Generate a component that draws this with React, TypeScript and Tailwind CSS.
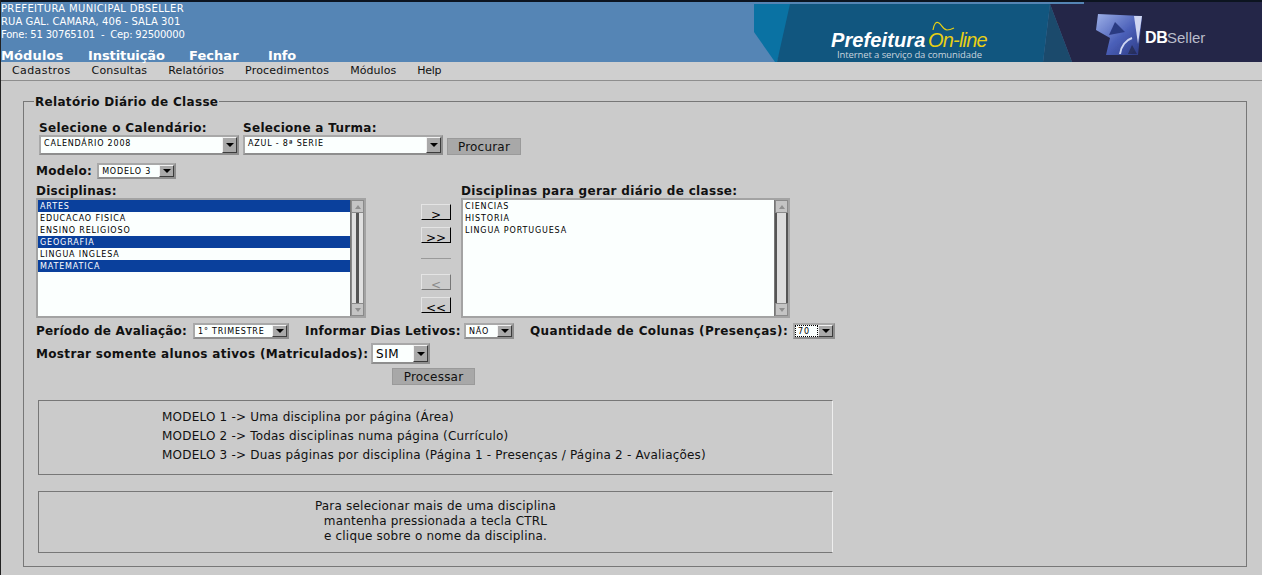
import React from "react";

const FONT = "[font-family:'DejaVu_Sans','Liberation_Sans',sans-serif]";

function Select({ label, w, h, big, dotted }: { label: string; w: string; h: string; big?: boolean; dotted?: boolean }) {
  return (
    <div className={`${w} ${h} flex shrink-0 border-2 border-solid border-t-[#a8a8a8] border-l-[#a8a8a8] border-r-[#8e8e8e] border-b-[#8e8e8e] bg-[#fbfffe]`}>
      <div className={`flex-1 min-w-0 overflow-hidden whitespace-nowrap text-black pl-[3px] ${big ? "text-[12px] leading-[19px] tracking-[0.6px]" : "text-[8px] leading-[13px] tracking-[0.8px]"} ${dotted ? "outline-dotted outline-1 -outline-offset-1 outline-black" : ""}`}>
        {label}
      </div>
      <div className="w-[15px] shrink-0 flex items-center justify-center border border-solid border-t-[#f2f2f2] border-l-[#f2f2f2] border-r-[#3c3c3c] border-b-[#3c3c3c] bg-[#a9a9a9]">
        <div className="w-0 h-0 border-x-[4px] border-x-transparent border-t-[4px] border-t-black" />
      </div>
    </div>
  );
}

function GrayButton({ label, w }: { label: string; w: string }) {
  return (
    <div className={`${w} h-[17px] flex items-center justify-center pt-[1px] bg-[#a8a8a8] border border-solid border-[#9a9a9a] text-[12px] tracking-[0.2px] text-[#111]`}>
      {label}
    </div>
  );
}

function ScrollBar({ alt }: { alt?: boolean }) {
  return (
    <div className="w-[14px] shrink-0 flex flex-col bg-[#b0b0b0] border-l border-solid border-[#777]">
      <div className="h-[13px] shrink-0 flex items-center justify-center bg-[#c4c4c4] border border-solid border-[#8a8a8a]">
        <div className="w-0 h-0 border-x-[3px] border-x-transparent border-b-[4px] border-b-[#8f8f8f]" />
      </div>
      {alt ? (
        <div className="flex-1 bg-[#dcdcdc] border-x-2 border-solid border-x-[#555]" />
      ) : (
        <div className="flex-1 flex justify-center bg-[#e0e0e0] border-x border-solid border-x-[#8a8a8a]">
          <div className="w-[3px] bg-[#555]" />
        </div>
      )}
      <div className="h-[13px] shrink-0 flex items-center justify-center bg-[#c4c4c4] border border-solid border-[#8a8a8a]">
        <div className="w-0 h-0 border-x-[3px] border-x-transparent border-t-[4px] border-t-[#8f8f8f]" />
      </div>
    </div>
  );
}

function ListBox({ items, w, alt }: { items: { t: string; s?: boolean }[]; w: string; alt?: boolean }) {
  return (
    <div className={`${w} h-[120px] flex border-2 border-solid border-[#a3a3a3] bg-[#fbfffe]`}>
      <div className="flex-1 min-w-0">
        {items.map((i) => (
          <div key={i.t} className={`h-[12px] leading-[13px] pl-[2px] text-[8px] tracking-[0.85px] ${i.s ? "bg-[#0a409c] text-white" : "text-black"}`}>
            {i.t}
          </div>
        ))}
      </div>
      <ScrollBar alt={alt} />
    </div>
  );
}

function Arrow({ label, dim, mb }: { label: string; dim?: boolean; mb: string }) {
  return (
    <div className={`w-[30px] h-[16px] ${mb} flex items-end justify-center overflow-hidden border border-solid border-t-[#e4e4e4] border-l-[#e4e4e4] ${dim ? "border-r-[#777] border-b-[#777] text-[#8a8a8a]" : "border-r-black border-b-black text-black"} text-[12px] leading-[7px]`}>
      {label}
    </div>
  );
}

function Logo() {
  return (
    <svg width="508" height="58" viewBox="0 0 508 58" className="block shrink-0" aria-hidden="true">
      <defs>
        <linearGradient id="cube" x1="0" y1="0" x2="1" y2="1">
          <stop offset="0" stopColor="#9db0e8" />
          <stop offset="0.55" stopColor="#4a5fb8" />
          <stop offset="1" stopColor="#2c3a82" />
        </linearGradient>
        <filter id="soft" x="-10%" y="-10%" width="120%" height="120%">
          <feGaussianBlur stdDeviation="0.6" />
        </filter>
      </defs>
      <rect width="508" height="58" fill="#5585b5" />
      <polygon points="0,0 40,0 23,58 21,58 0,28" fill="#0a72a3" />
      <polygon points="36,0 296,0 289,58 23,58" fill="#11567f" />
      <polygon points="296,0 318,58 289,58" fill="#1b4a6c" />
      <polygon points="296,0 508,0 508,58 318,58" fill="#242648" />
      <text x="77" y="43" fontFamily="'Liberation Sans', sans-serif" fontSize="20" fontWeight="700" fontStyle="italic" fill="#ffffff" letterSpacing="0.1">Prefeitura</text>
      <text x="174" y="43" fontFamily="'Liberation Sans', sans-serif" fontSize="20" fontStyle="italic" fill="#e8cf14" letterSpacing="-0.8">On-line</text>
      <path d="M179 26 C180 20 182 17 185 19 C188 21 189 26 193 26 C196 26 198 25 200 24" fill="none" stroke="#e8cf14" strokeWidth="1.2" />
      <text x="83" y="54" fontFamily="'Open Sans', sans-serif" fontSize="9.5" fill="#c8d4de" textLength="145">Internet a serviço da comunidade</text>
      <g filter="url(#soft)">
        <path d="M344 10 L388 12 L384 51 L352 51 L356 34 L342 26 Z" fill="url(#cube)" />
        <path d="M380 12 L388 12 L384 40 Z" fill="#cfd6f2" />
        <path d="M361 18 L371 28 L355 31 Z" fill="#2c3a82" />
        <path d="M366 50 C367 42 372 36 378 34" fill="none" stroke="#cfd6f2" strokeWidth="2" />
        <path d="M374 50 L378 41 L383 50 Z" fill="#242648" opacity="0.7" />
      </g>
      <text x="391" y="39" fontFamily="'Liberation Sans', sans-serif" fontSize="16" fontWeight="700" fill="#ffffff" letterSpacing="-0.2">DB</text>
      <text x="413" y="39" fontFamily="'Liberation Sans', sans-serif" fontSize="15" fill="#b9bccb">Seller</text>
    </svg>
  );
}

const left = [
  { t: "ARTES", s: true },
  { t: "EDUCACAO FISICA" },
  { t: "ENSINO RELIGIOSO" },
  { t: "GEOGRAFIA", s: true },
  { t: "LINGUA INGLESA" },
  { t: "MATEMATICA", s: true },
];
const right = [{ t: "CIENCIAS" }, { t: "HISTORIA" }, { t: "LINGUA PORTUGUESA" }];

const labelCls = "font-bold text-[12px] text-[#111] whitespace-nowrap";

export default function App() {
  return (
    <div className={`w-[1262px] h-[575px] overflow-hidden bg-[#cbcbcb] border-l border-solid border-[#222] ${FONT}`}>
      <div className="h-[62px] flex justify-between bg-[#5585b5] border-t-2 border-solid border-[#0c1420]">
        <div className="text-white">
          <div className="text-[10px] leading-[12px] pt-[1px] tracking-[0.34px]">PREFEITURA MUNICIPAL DBSELLER</div>
          <div className="text-[10px] leading-[13px] tracking-[0.07px]">RUA GAL. CAMARA, 406 - SALA 301</div>
          <div className="text-[10px] leading-[13px] tracking-[-0.2px] whitespace-pre">Fone: 51 30765101  -  Cep: 92500000</div>
          <div className="flex mt-[7px] font-bold text-[13px] leading-[16px] whitespace-nowrap">
            <span className="w-[87px] tracking-[0.12px]">Módulos</span>
            <span className="w-[101px] tracking-[-0.09px]">Instituição</span>
            <span className="w-[79px] tracking-[0.05px]">Fechar</span>
            <span className="tracking-[-0.2px]">Info</span>
          </div>
        </div>
        <div className="flex flex-col w-[508px]">
          <div className="h-[2px] flex">
            <div className="w-[330px] bg-[#5585b5]" />
            <div className="flex-1 bg-[#242648]" />
          </div>
          <Logo />
        </div>
      </div>
      <div className="h-[19px] flex gap-[21px] pl-[11px] items-center bg-[#cfcfcf] border-b border-solid border-[#8e8e8e] text-[11px] text-[#111]">
        <span className="tracking-[0.4px]">Cadastros</span>
        <span className="tracking-[0.2px]">Consultas</span>
        <span className="tracking-[0.1px]">Relatórios</span>
        <span className="tracking-[0.2px]">Procedimentos</span>
        <span className="tracking-[0.05px]">Módulos</span>
        <span className="tracking-[-0.3px]">Help</span>
      </div>

      <fieldset className="ml-[22px] mt-[15px] h-[471px] w-[1224px] border border-solid border-[#777] pl-[12px] pr-0 pt-0 pb-0">
        <legend className="-ml-[2px] px-[1px] pt-[2px] font-bold text-[12px] leading-[8px] tracking-[0.32px] text-[#111]">Relatório Diário de Classe</legend>
        <div className="flex gap-[4px] ml-[3px] mt-[15px] items-start">
          <div>
            <div className={`${labelCls} leading-[14px] tracking-[0.38px]`}>Selecione o Calendário:</div>
            <Select label="CALENDÁRIO 2008" w="w-[200px]" h="h-[20px]" />
          </div>
          <div>
            <div className={`${labelCls} leading-[14px] tracking-[0.3px]`}>Selecione a Turma:</div>
            <Select label="AZUL - 8ª SERIE" w="w-[200px]" h="h-[20px]" />
          </div>
          <div className="pt-[17px]"><GrayButton label="Procurar" w="w-[74px]" /></div>
        </div>
        <div className="flex items-center gap-[5px] mt-[8px] h-[16px]">
          <span className={`${labelCls} tracking-[0.3px]`}>Modelo:</span>
          <Select label="MODELO 3" w="w-[79px]" h="h-[16px]" />
        </div>
        <div className="flex mt-[4px]">
          <div>
            <div className={`${labelCls} h-[15px] leading-[17px] tracking-[0.24px]`}>Disciplinas:</div>
            <ListBox items={left} w="w-[330px]" />
          </div>
          <div className="ml-[55px] pt-[21px] w-[40px]">
            <Arrow label=">" mb="mb-[7px]" />
            <Arrow label=">>" mb="mb-[15px]" />
            <div className="w-[30px] h-px bg-[#9a9a9a] mb-[15px]" />
            <Arrow label="<" dim mb="mb-[7px]" />
            <Arrow label="<<" mb="mb-0" />
          </div>
          <div>
            <div className={`${labelCls} h-[15px] leading-[17px] tracking-[0.32px]`}>Disciplinas para gerar diário de classe:</div>
            <ListBox items={right} w="w-[329px]" alt />
          </div>
        </div>
        <div className="flex items-center h-[17px] mt-[4px]">
          <span className={`${labelCls} w-[157px] tracking-[0.22px]`}>Período de Avaliação:</span>
          <Select label="1° TRIMESTRE" w="w-[96px]" h="h-[16px]" />
          <span className={`${labelCls} ml-[16px] w-[159px] tracking-[0.25px]`}>Informar Dias Letivos:</span>
          <Select label="NÃO" w="w-[50px]" h="h-[16px]" />
          <span className={`${labelCls} ml-[16px] w-[263px] tracking-[0.35px]`}>Quantidade de Colunas (Presenças):</span>
          <Select label="70" w="w-[42px]" h="h-[16px]" dotted />
        </div>
        <div className="flex items-center h-[21px] mt-[4px]">
          <span className={`${labelCls} w-[335px] tracking-[0.33px]`}>Mostrar somente alunos ativos (Matriculados):</span>
          <Select label="SIM" w="w-[59px]" h="h-[21px]" big />
        </div>
        <div className="ml-[356px] mt-[4px]"><GrayButton label="Processar" w="w-[83px]" /></div>
        <div className="w-[795px] h-[75px] ml-[2px] mt-[15px] pl-[123px] pt-[7px] border border-solid border-t-[#777] border-l-[#777] border-r-[#eee] border-b-[#777] text-[12px] leading-[19px] tracking-[0.2px] text-[#111]">
          <div>MODELO 1 -&gt; Uma disciplina por página (Área)</div>
          <div>MODELO 2 -&gt; Todas disciplinas numa página (Currículo)</div>
          <div>MODELO 3 -&gt; Duas páginas por disciplina (Página 1 - Presenças / Página 2 - Avaliações)</div>
        </div>
        <div className="w-[795px] h-[62px] ml-[2px] mt-[16px] pt-[7px] text-center border border-solid border-t-[#777] border-l-[#777] border-r-[#eee] border-b-[#777] text-[12px] leading-[15px] tracking-[0.2px] text-[#111]">
          <div>Para selecionar mais de uma disciplina</div>
          <div>mantenha pressionada a tecla CTRL</div>
          <div>e clique sobre o nome da disciplina.</div>
        </div>
      </fieldset>
    </div>
  );
}
